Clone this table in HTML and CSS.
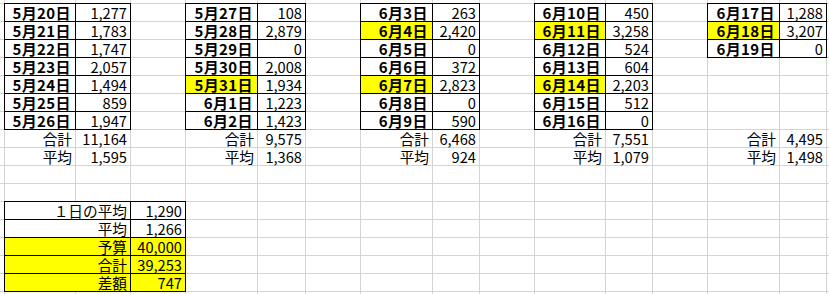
FILE: index.html
```html
<!DOCTYPE html>
<html lang="ja">
<head>
<meta charset="utf-8">
<title>集計</title>
<link rel="stylesheet" href="styles.css">
</head>
<body>
<table class="sheet">
<colgroup>
<col class="w4"><col class="w70"><col class="w54"><col class="w54"><col class="w71"><col class="w47"><col class="w54"><col class="w71"><col class="w46"><col class="w54"><col class="w70"><col class="w46"><col class="w54"><col class="w71"><col class="w46"><col class="w60">
</colgroup>
<tr class="top"><td></td><td></td><td></td><td></td><td></td><td></td><td></td><td></td><td></td><td></td><td></td><td></td><td></td><td></td><td></td><td></td></tr>
<tr><td></td><td class="b d">5月20日</td><td class="b n">1,277</td><td></td><td class="b d">5月27日</td><td class="b n">108</td><td></td><td class="b d">6月3日</td><td class="b n">263</td><td></td><td class="b d">6月10日</td><td class="b n">450</td><td></td><td class="b d">6月17日</td><td class="b n">1,288</td><td></td></tr>
<tr><td></td><td class="b d">5月21日</td><td class="b n">1,783</td><td></td><td class="b d">5月28日</td><td class="b n">2,879</td><td></td><td class="b d y">6月4日</td><td class="b n">2,420</td><td></td><td class="b d y">6月11日</td><td class="b n">3,258</td><td></td><td class="b d y">6月18日</td><td class="b n">3,207</td><td></td></tr>
<tr><td></td><td class="b d">5月22日</td><td class="b n">1,747</td><td></td><td class="b d">5月29日</td><td class="b n">0</td><td></td><td class="b d">6月5日</td><td class="b n">0</td><td></td><td class="b d">6月12日</td><td class="b n">524</td><td></td><td class="b d">6月19日</td><td class="b n">0</td><td></td></tr>
<tr><td></td><td class="b d">5月23日</td><td class="b n">2,057</td><td></td><td class="b d">5月30日</td><td class="b n">2,008</td><td></td><td class="b d">6月6日</td><td class="b n">372</td><td></td><td class="b d">6月13日</td><td class="b n">604</td><td></td><td></td><td></td><td></td></tr>
<tr><td></td><td class="b d">5月24日</td><td class="b n">1,494</td><td></td><td class="b d y">5月31日</td><td class="b n">1,934</td><td></td><td class="b d y">6月7日</td><td class="b n">2,823</td><td></td><td class="b d y">6月14日</td><td class="b n">2,203</td><td></td><td></td><td></td><td></td></tr>
<tr><td></td><td class="b d">5月25日</td><td class="b n">859</td><td></td><td class="b d">6月1日</td><td class="b n">1,223</td><td></td><td class="b d">6月8日</td><td class="b n">0</td><td></td><td class="b d">6月15日</td><td class="b n">512</td><td></td><td></td><td></td><td></td></tr>
<tr><td></td><td class="b d">5月26日</td><td class="b n">1,947</td><td></td><td class="b d">6月2日</td><td class="b n">1,423</td><td></td><td class="b d">6月9日</td><td class="b n">590</td><td></td><td class="b d">6月16日</td><td class="b n">0</td><td></td><td></td><td></td><td></td></tr>
<tr><td></td><td class="n">合計</td><td class="n">11,164</td><td></td><td class="n">合計</td><td class="n">9,575</td><td></td><td class="n">合計</td><td class="n">6,468</td><td></td><td class="n">合計</td><td class="n">7,551</td><td></td><td class="n">合計</td><td class="n">4,495</td><td></td></tr>
<tr><td></td><td class="n">平均</td><td class="n">1,595</td><td></td><td class="n">平均</td><td class="n">1,368</td><td></td><td class="n">平均</td><td class="n">924</td><td></td><td class="n">平均</td><td class="n">1,079</td><td></td><td class="n">平均</td><td class="n">1,498</td><td></td></tr>
<tr><td></td><td></td><td></td><td></td><td></td><td></td><td></td><td></td><td></td><td></td><td></td><td></td><td></td><td></td><td></td><td></td></tr>
<tr><td></td><td></td><td></td><td></td><td></td><td></td><td></td><td></td><td></td><td></td><td></td><td></td><td></td><td></td><td></td><td></td></tr>
<tr><td></td><td class="b n" colspan="2">１日の平均</td><td class="b n">1,290</td><td></td><td></td><td></td><td></td><td></td><td></td><td></td><td></td><td></td><td></td><td></td><td></td></tr>
<tr><td></td><td class="b n" colspan="2">平均</td><td class="b n">1,266</td><td></td><td></td><td></td><td></td><td></td><td></td><td></td><td></td><td></td><td></td><td></td><td></td></tr>
<tr><td></td><td class="b n y" colspan="2">予算</td><td class="b n y">40,000</td><td></td><td></td><td></td><td></td><td></td><td></td><td></td><td></td><td></td><td></td><td></td><td></td></tr>
<tr><td></td><td class="b n y" colspan="2">合計</td><td class="b n y">39,253</td><td></td><td></td><td></td><td></td><td></td><td></td><td></td><td></td><td></td><td></td><td></td><td></td></tr>
<tr><td></td><td class="b n y" colspan="2">差額</td><td class="b n y">747</td><td></td><td></td><td></td><td></td><td></td><td></td><td></td><td></td><td></td><td></td><td></td><td></td></tr>
<tr><td></td><td></td><td></td><td></td><td></td><td></td><td></td><td></td><td></td><td></td><td></td><td></td><td></td><td></td><td></td><td></td></tr>
</table>
</body>
</html>
```
FILE: styles.css
```css
html, body {
  margin: 0;
  padding: 0;
  background: #fff;
  overflow: hidden;
}

.sheet {
  border-collapse: separate;
  border-spacing: 1px;
  background: #d4d4d4;
  table-layout: fixed;
  width: 889px;
  margin: -1px 0 0 -1px;
  font-family: "Noto Sans CJK JP", sans-serif;
  font-size: 14.67px;
  color: #000;
}

.w4 { width: 4px; }
.w46 { width: 46px; }
.w47 { width: 47px; }
.w54 { width: 54px; }
.w60 { width: 60px; }
.w70 { width: 70px; }
.w71 { width: 71px; }

.sheet td {
  background: #fff;
  box-sizing: border-box;
  padding: 0 3px 0 0;
  height: 17px;
  line-height: 17px;
  text-align: right;
  vertical-align: bottom;
  white-space: nowrap;
}

.sheet tr.top td {
  height: 3px;
  line-height: 3px;
}

.sheet td.b {
  box-shadow: 0 0 0 1px #000;
}

.sheet td.d {
  font-weight: 700;
  font-size: 15px;
  letter-spacing: 0.4px;
  padding-right: 4px;
}

.sheet td.y {
  background: #ffff00;
}
```
